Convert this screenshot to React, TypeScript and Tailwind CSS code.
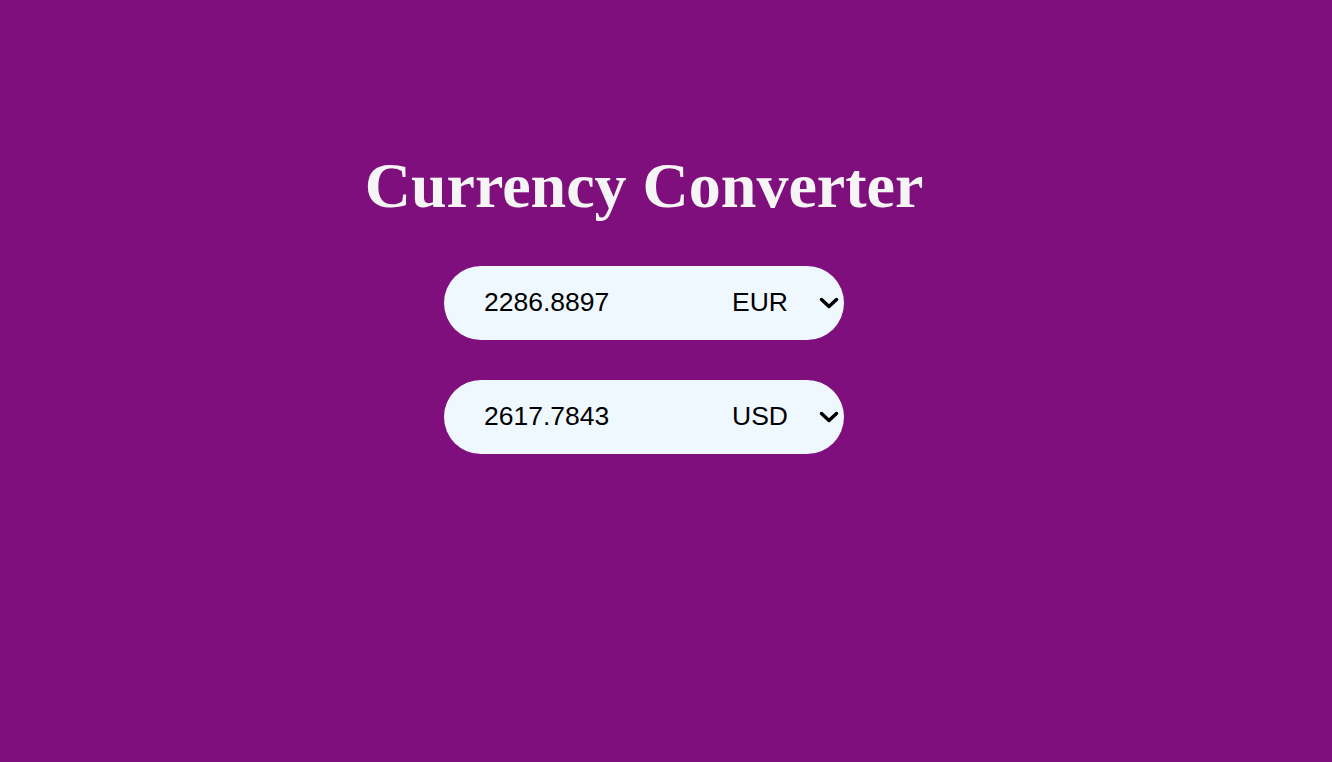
import { useState } from "react";

const rates: Record<string, number> = { USD: 1, EUR: 0.87361, GBP: 0.7423, JPY: 149.2 };

const Row = ({
  amount,
  currency,
  onAmount,
  onCurrency,
}: {
  amount: string;
  currency: string;
  onAmount: (v: string) => void;
  onCurrency: (v: string) => void;
}) => (
  <div className="flex h-[74px] w-[400px] items-center rounded-full bg-[#f0f8ff] pl-[40px] pr-[6px]">
    <input
      value={amount}
      onChange={(e) => onAmount(e.target.value)}
      className="w-[240px] bg-transparent text-[26.5px] text-black outline-none"
      style={{ fontFamily: '"Liberation Sans", Arial, sans-serif' }}
    />
    <div className="relative flex flex-1 items-center">
      <select
        value={currency}
        onChange={(e) => onCurrency(e.target.value)}
        className="w-full appearance-none bg-transparent pl-[8px] text-[26.5px] text-black outline-none"
        style={{ fontFamily: '"Liberation Sans", Arial, sans-serif' }}
      >
        {Object.keys(rates).map((c) => (
          <option key={c} value={c}>
            {c}
          </option>
        ))}
      </select>
      <svg
        className="pointer-events-none absolute right-[-2px] top-1/2 -translate-y-1/2"
        width="22"
        height="14"
        viewBox="0 0 22 14"
        fill="none"
      >
        <path d="M3.5 3.5 11 10.5 18.5 3.5" stroke="black" strokeWidth="3.5" strokeLinecap="round" strokeLinejoin="round" />
      </svg>
    </div>
  </div>
);

const App = () => {
  const [a, setA] = useState("2286.8897");
  const [b, setB] = useState("2617.7843");
  const [ca, setCa] = useState("EUR");
  const [cb, setCb] = useState("USD");

  return (
    <div className="min-h-[762px] w-full bg-[#800f7e]">
      <div className="flex flex-col items-center pr-[44px] pt-[146px]">
        <h1
          className="text-[64px] font-bold leading-[80px] text-[#f5f5f5]"
          style={{ fontFamily: '"Liberation Serif", "Times New Roman", serif' }}
        >
          Currency Converter
        </h1>
        <div className="mt-[40px] flex flex-col gap-[40px]">
          <Row
            amount={a}
            currency={ca}
            onAmount={(v) => {
              setA(v);
              setB(((parseFloat(v) || 0) / rates[ca] * rates[cb]).toFixed(4));
            }}
            onCurrency={setCa}
          />
          <Row
            amount={b}
            currency={cb}
            onAmount={(v) => {
              setB(v);
              setA(((parseFloat(v) || 0) / rates[cb] * rates[ca]).toFixed(4));
            }}
            onCurrency={setCb}
          />
        </div>
      </div>
    </div>
  );
};

export default App;
